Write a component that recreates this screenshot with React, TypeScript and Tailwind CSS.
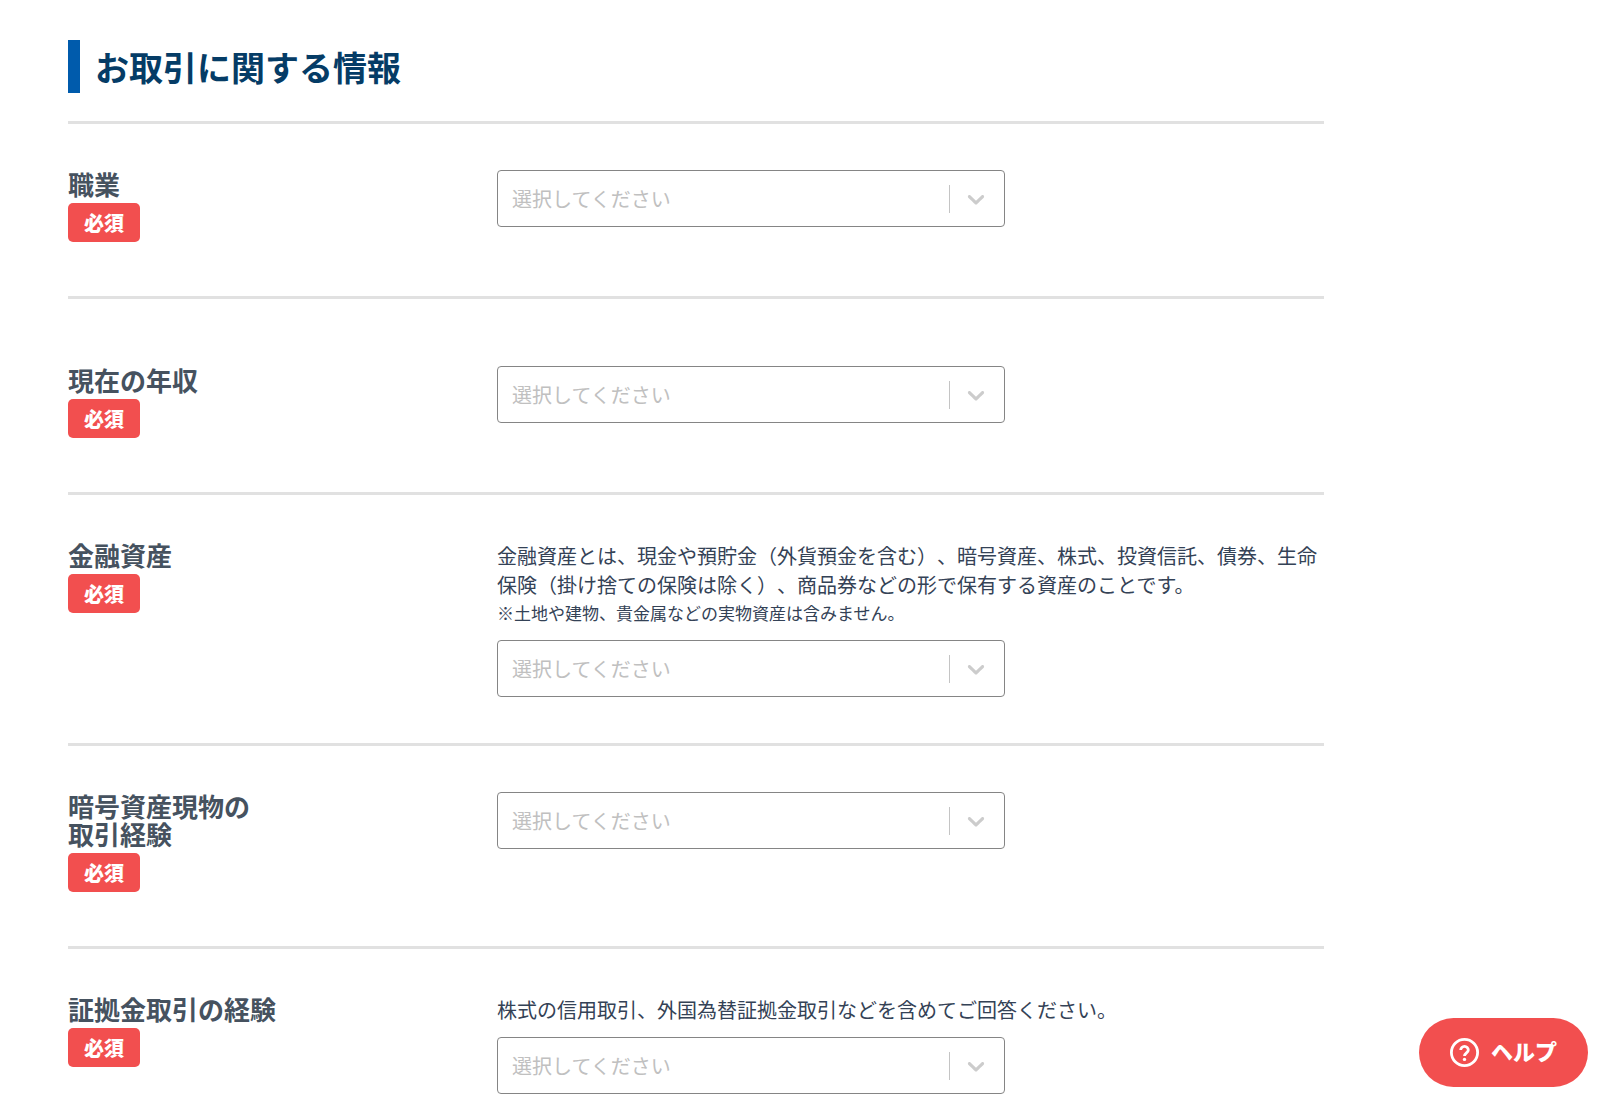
import React, { useState } from 'react';

interface Question {
  id: string;
  label: string[];
  description?: string;
  note?: string;
  spacious?: boolean;
}

const questions: Question[] = [
  { id: 'occupation', label: ['職業'] },
  { id: 'income', label: ['現在の年収'], spacious: true },
  {
    id: 'assets',
    label: ['金融資産'],
    description:
      '金融資産とは、現金や預貯金（外貨預金を含む）、暗号資産、株式、投資信託、債券、生命保険（掛け捨ての保険は除く）、商品券などの形で保有する資産のことです。',
    note: '※土地や建物、貴金属などの実物資産は含みません。'
  },
  { id: 'crypto', label: ['暗号資産現物の', '取引経験'] },
  {
    id: 'margin',
    label: ['証拠金取引の経験'],
    description: '株式の信用取引、外国為替証拠金取引などを含めてご回答ください。'
  }
];

interface SelectBoxProps {
  id: string;
  value: string;
  onChange: (val: string) => void;
}

const SelectBox: React.FC<SelectBoxProps> = ({ id, value, onChange }) => (
  <div className="relative w-full max-w-[508px]">
    <select
      id={id}
      value={value}
      onChange={(e) => onChange(e.target.value)}
      className="block w-full h-[57px] pl-[14px] pr-16 appearance-none rounded-[4px] border border-[#858585] bg-white text-[20px] text-[#c0c0c0]"
    >
      <option value="">選択してください</option>
    </select>
    {/* Divider and chevron */}
    <div className="absolute inset-y-0 right-0 flex items-center pointer-events-none">
      <span className="w-px h-7 bg-[#c4c4c4]"></span>
      <svg className="w-7 h-7 ml-3 mr-[15px] fill-[#cccccc]" viewBox="0 0 20 20" aria-hidden="true">
        <path d="M4.516 7.548c0.436-0.446 1.043-0.481 1.576 0l3.908 3.747 3.908-3.747c0.533-0.481 1.141-0.446 1.574 0 0.436 0.445 0.408 1.197 0 1.615-0.406 0.418-4.695 4.502-4.695 4.502-0.217 0.223-0.502 0.335-0.787 0.335s-0.57-0.112-0.789-0.335c0 0-4.287-4.084-4.695-4.502s-0.436-1.17 0-1.615z" />
      </svg>
    </div>
  </div>
);

const HelpIcon: React.FC = () => (
  <svg className="w-[29px] h-[29px]" viewBox="0 0 29 29" fill="none" stroke="currentColor" aria-hidden="true">
    <circle cx="14.5" cy="14.5" r="13.1" strokeWidth="2.8" />
    <path d="M10.7 12.1a3.8 3.8 0 1 1 7.6 0c0 2.7-3.8 3-3.8 6" strokeWidth="2.8" />
    <circle cx="14.5" cy="21.4" r="1.7" fill="currentColor" stroke="none" />
  </svg>
);

const App: React.FC = () => {
  const [answers, setAnswers] = useState<Record<string, string>>({});

  return (
    <div className="min-h-screen bg-white font-['Noto_Sans_CJK_JP',sans-serif] text-[#344256] [text-spacing-trim:space-all]">
      <main className="max-w-[1324px] pt-10 pl-[68px]">
        <h1 className="mb-7 border-l-[12px] border-[#005bac] pl-[15px] text-[34px] leading-[53px] font-bold text-[#053c66]">
          お取引に関する情報
        </h1>

        <form>
          {questions.map((q) => (
            <div
              key={q.id}
              className={`flex border-t-[3px] border-[#e1e1e1] ${q.spacious ? 'pt-[67px]' : 'pt-[46px]'}`}
            >
              <div className="w-[429px] shrink-0 pb-[54px]">
                <label htmlFor={q.id} className="block text-[26px] leading-7 font-bold text-[#46525f]">
                  {q.label.map((line) => (
                    <span key={line} className="block">{line}</span>
                  ))}
                </label>
                <span className="mt-[5px] inline-block rounded-[5px] bg-[#f24f4f] px-4 text-[20px] leading-[39px] font-black text-white align-top">
                  必須
                </span>
              </div>
              <div className="grow pb-[46px]">
                {q.description && (
                  <div className="mb-[13px]">
                    <p className="text-[20px] leading-[29px]">{q.description}</p>
                    {q.note && <p className="text-[17px] leading-7">{q.note}</p>}
                  </div>
                )}
                <SelectBox
                  id={q.id}
                  value={answers[q.id] || ''}
                  onChange={(val) => setAnswers({ ...answers, [q.id]: val })}
                />
              </div>
            </div>
          ))}
        </form>
      </main>

      {/* Floating help button */}
      <button
        type="button"
        className="fixed right-3 bottom-[11px] flex h-[69px] items-center gap-3 rounded-full bg-[#f24f4f] px-[31px] text-[22px] font-black text-white"
      >
        <HelpIcon />
        <span className="pb-1">ヘルプ</span>
      </button>
    </div>
  );
};

export default App;
